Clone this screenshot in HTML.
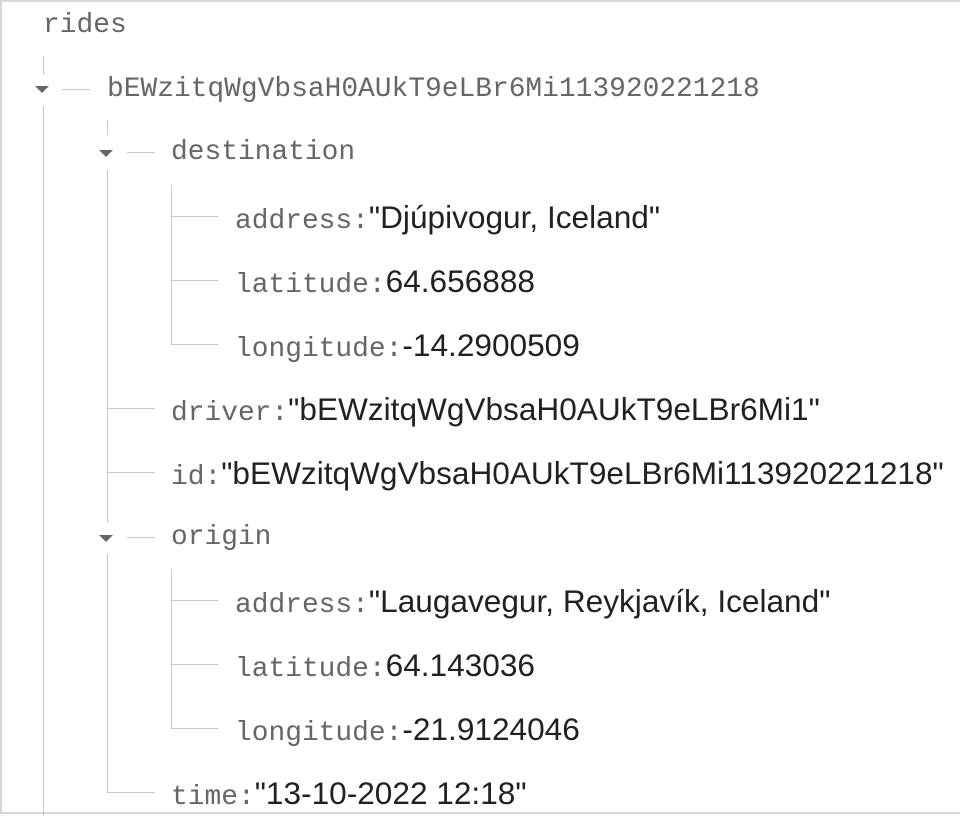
<!DOCTYPE html>
<html><head><style>
html,body{margin:0;padding:0;background:#fff;width:960px;height:816px;overflow:hidden}
.box{position:absolute;left:0;top:0;width:958px;height:810px;border:2px solid #d6d6d6;border-right:none}
.r{position:absolute;height:40px;line-height:40px;white-space:nowrap;margin-top:1px}
.k{font-family:"Liberation Mono",monospace;font-size:27.9px;color:#666}
.v{font-family:"Liberation Sans",sans-serif;font-size:31.6px;color:#212121;margin-left:-4px}
.h{position:absolute;height:1px;background:#c8c8c8}
.vl{position:absolute;width:1px;background:#c8c8c8}
.t{position:absolute;width:0;height:0;border-left:7px solid transparent;border-right:7px solid transparent;border-top:7px solid #666}
</style></head><body>
<div class="box"></div>
<div class="r k" style="left:43px;top:5px">rides</div>

<div class="vl" style="left:43px;top:56px;height:18px"></div>
<div class="vl" style="left:43px;top:106px;height:710px"></div>
<div class="t" style="left:35px;top:86px"></div>
<div class="h" style="left:62px;top:89px;width:28px"></div>
<div class="r k" style="left:107px;top:69px">bEWzitqWgVbsaH0AUkT9eLBr6Mi113920221218</div>

<div class="vl" style="left:107px;top:120px;height:15px"></div>
<div class="vl" style="left:107px;top:170px;height:352px"></div>
<div class="vl" style="left:107px;top:554px;height:238px"></div>
<div class="t" style="left:99px;top:150px"></div>
<div class="h" style="left:127px;top:152px;width:28px"></div>
<div class="r k" style="left:171px;top:132px">destination</div>

<div class="vl" style="left:171px;top:185px;height:160px"></div>
<div class="h" style="left:171px;top:216px;width:47px"></div>
<div class="r" style="left:235px;top:196px"><span class="k">address:</span> <span class="v">"Djúpivogur, Iceland"</span></div>
<div class="h" style="left:171px;top:280px;width:47px"></div>
<div class="r" style="left:235px;top:260px"><span class="k">latitude:</span> <span class="v">64.656888</span></div>
<div class="h" style="left:171px;top:344px;width:47px"></div>
<div class="r" style="left:235px;top:324px"><span class="k">longitude:</span> <span class="v">-14.2900509</span></div>

<div class="h" style="left:107px;top:408px;width:48px"></div>
<div class="r" style="left:171px;top:388px"><span class="k">driver:</span> <span class="v">"bEWzitqWgVbsaH0AUkT9eLBr6Mi1"</span></div>
<div class="h" style="left:107px;top:472px;width:48px"></div>
<div class="r" style="left:171px;top:452px"><span class="k">id:</span> <span class="v">"bEWzitqWgVbsaH0AUkT9eLBr6Mi113920221218"</span></div>

<div class="t" style="left:99px;top:535px"></div>
<div class="h" style="left:127px;top:537px;width:28px"></div>
<div class="r k" style="left:171px;top:517px">origin</div>

<div class="vl" style="left:171px;top:569px;height:160px"></div>
<div class="h" style="left:171px;top:600px;width:47px"></div>
<div class="r" style="left:235px;top:580px"><span class="k">address:</span> <span class="v">"Laugavegur, Reykjavík, Iceland"</span></div>
<div class="h" style="left:171px;top:664px;width:47px"></div>
<div class="r" style="left:235px;top:644px"><span class="k">latitude:</span> <span class="v">64.143036</span></div>
<div class="h" style="left:171px;top:728px;width:47px"></div>
<div class="r" style="left:235px;top:708px"><span class="k">longitude:</span> <span class="v">-21.9124046</span></div>

<div class="h" style="left:107px;top:792px;width:48px"></div>
<div class="r" style="left:171px;top:772px"><span class="k">time:</span> <span class="v">"13-10-2022 12:18"</span></div>
</body></html>
